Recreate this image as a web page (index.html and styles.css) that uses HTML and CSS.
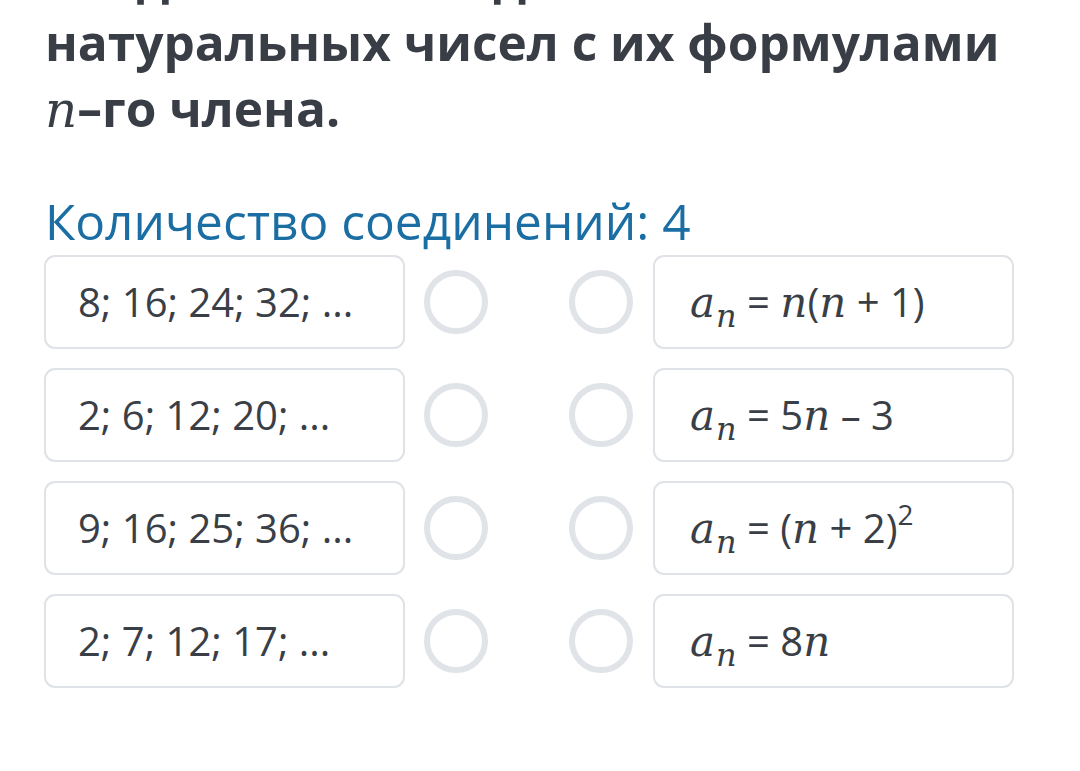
FILE: index.html
```html
<!DOCTYPE html>
<html lang="ru">
<head>
  <meta charset="UTF-8">
  <meta name="viewport" content="width=device-width, initial-scale=1.0">
  <title>Соотнесите последовательности</title>
  <link rel="stylesheet" href="styles.css">
</head>
<body>
  <div class="task">
    <h2 class="question">
      Соедините последовательности<br>
      натуральных чисел с их формулами<br>
      <span class="var">n</span>–го члена.
    </h2>

    <p class="count">Количество соединений: 4</p>

    <div class="match">
      <div class="row">
        <div class="card"><span>8; 16; 24; 32; ...</span></div>
        <span class="dot"></span>
        <span class="dot"></span>
        <div class="card formula"><span><i>a</i><sub>n</sub> = <i>n</i>(<i>n</i> + 1)</span></div>
      </div>
      <div class="row">
        <div class="card"><span>2; 6; 12; 20; ...</span></div>
        <span class="dot"></span>
        <span class="dot"></span>
        <div class="card formula"><span><i>a</i><sub>n</sub> = 5<i>n</i> – 3</span></div>
      </div>
      <div class="row">
        <div class="card"><span>9; 16; 25; 36; ...</span></div>
        <span class="dot"></span>
        <span class="dot"></span>
        <div class="card formula"><span><i>a</i><sub>n</sub> = (<i>n</i> + 2)<sup>2</sup></span></div>
      </div>
      <div class="row">
        <div class="card"><span>2; 7; 12; 17; ...</span></div>
        <span class="dot"></span>
        <span class="dot"></span>
        <div class="card formula"><span><i>a</i><sub>n</sub> = 8<i>n</i></span></div>
      </div>
    </div>
  </div>
</body>
</html>
```

FILE: styles.css
```css
/* Reset */
* {
    margin: 0;
    padding: 0;
    box-sizing: border-box;
}

body {
    font-family: 'Open Sans', 'Noto Sans', sans-serif;
    background: #fff;
    color: #3a3f47;
    overflow: hidden;
}

/* Task block */
.task {
    padding: 0 45px;
}

/* Question text, first line is scrolled off the top */
.question {
    font-size: 49.6px;
    font-weight: 700;
    line-height: 66px;
    color: #393e46;
    margin-top: -57px;
    white-space: nowrap;
}

.question .var,
.formula i,
.formula sub {
    font-family: 'DejaVu Serif', serif;
    font-style: italic;
    font-weight: 400;
}

.question .var {
    font-size: 50px;
    line-height: 1;
}

/* Connections counter */
.count {
    margin-top: 50px;
    font-size: 49.6px;
    line-height: 60px;
    color: #1a6ea3;
}

/* Matching rows */
.match {
    display: flex;
    flex-direction: column;
    gap: 19px;
    margin-top: 4px;
}

.row {
    display: flex;
    align-items: center;
    height: 94px;
}

.card {
    width: 361px;
    height: 100%;
    border: 2px solid #dfe2e6;
    border-radius: 11px;
    display: flex;
    align-items: center;
    padding-left: 32px;
    padding-bottom: 2px;
    font-size: 40px;
    color: #3a3f47;
    margin-left: -1px;
    white-space: pre;
}

.dot {
    width: 64px;
    height: 64px;
    border: 6px solid #e0e3e7;
    border-radius: 50%;
    margin-left: 19px;
}

.dot + .dot {
    margin-left: 81px;
}

.formula {
    margin-left: 20px;
    padding-left: 35px;
}

.formula i {
    font-size: 42px;
}

.formula sub {
    font-size: 32px;
    vertical-align: -10px;
    line-height: 0;
    margin-left: 1px;
}

.formula sup {
    font-size: 28px;
    vertical-align: 18px;
    line-height: 0;
}
```
